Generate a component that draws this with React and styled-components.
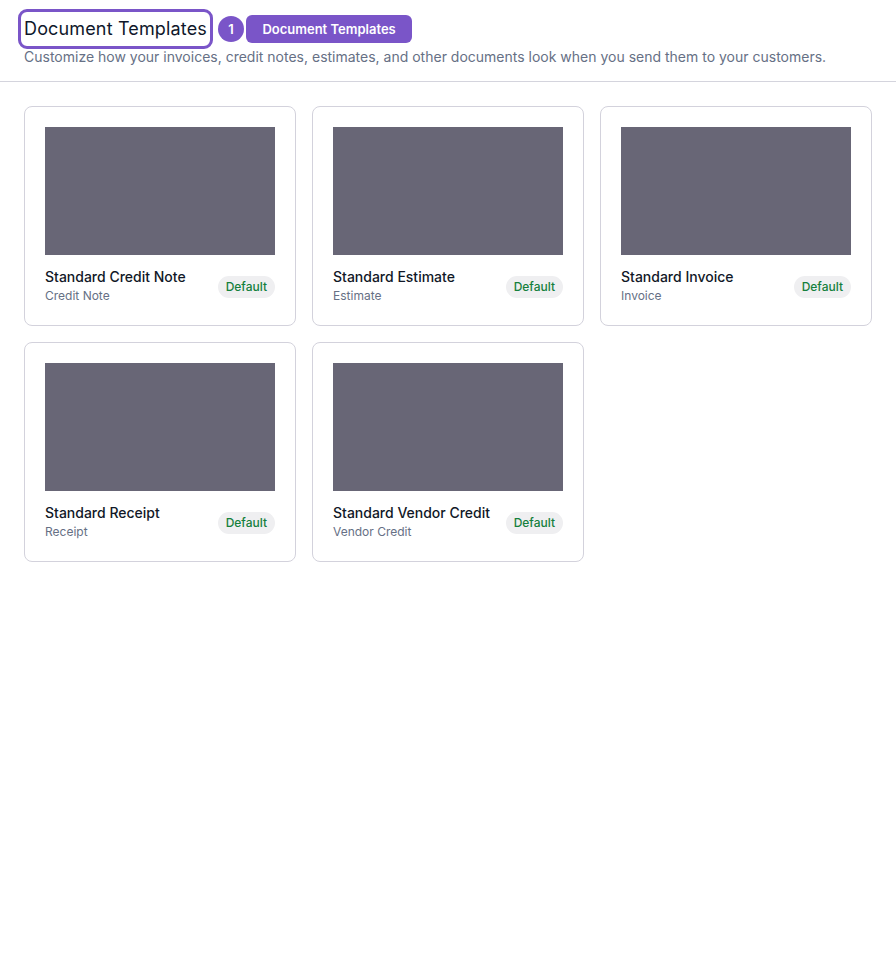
import styled, { createGlobalStyle } from "styled-components";

const GlobalStyle = createGlobalStyle`
  body {
    margin: 0;
    background: #ffffff;
    font-family: Inter, "Noto Sans", sans-serif;
    color: #111827;
  }
`;

const templates = [
  { name: "Standard Credit Note", type: "Credit Note" },
  { name: "Standard Estimate", type: "Estimate" },
  { name: "Standard Invoice", type: "Invoice" },
  { name: "Standard Receipt", type: "Receipt" },
  { name: "Standard Vendor Credit", type: "Vendor Credit" },
];

function App() {
  return (
    <>
      <GlobalStyle />
      <Header>
        <TitleRow>
          <Title>Document Templates</Title>
          <StepBadge>1</StepBadge>
          <StepLabel>Document Templates</StepLabel>
        </TitleRow>
        <Subtitle>
          Customize how your invoices, credit notes, estimates, and other documents look when you send them to your customers.
        </Subtitle>
      </Header>
      <Grid>
        {templates.map((t) => (
          <Card key={t.name}>
            <Preview />
            <CardFooter>
              <div>
                <CardName>{t.name}</CardName>
                <CardType>{t.type}</CardType>
              </div>
              <DefaultPill>Default</DefaultPill>
            </CardFooter>
          </Card>
        ))}
      </Grid>
    </>
  );
}

const Header = styled.header`
  padding: 15px 24px 14px;
  border-bottom: 1px solid #d4d4dd;
`;

const TitleRow = styled.div`
  display: flex;
  align-items: center;
`;

const Title = styled.h1`
  margin: 0;
  font-size: 18px;
  line-height: 28px;
  font-weight: 400;
  letter-spacing: 0.15px;
  color: #0f172a;
  outline: 3px solid #7a55c8;
  outline-offset: 3px;
  border-radius: 3px;
`;

const StepBadge = styled.span`
  margin-left: 11px;
  width: 26px;
  height: 26px;
  border-radius: 50%;
  background: #7a55c8;
  color: #fff;
  font-size: 13px;
  font-weight: 600;
  display: flex;
  align-items: center;
  justify-content: center;
`;

const StepLabel = styled.span`
  margin-left: 2px;
  height: 28px;
  padding: 0 16.5px;
  border-radius: 6px;
  background: #7a55c8;
  color: #fff;
  font-size: 13px;
  font-weight: 600;
  display: flex;
  align-items: center;
`;

const Subtitle = styled.p`
  margin: 0;
  margin-top: 4px;
  font-size: 14px;
  line-height: 20px;
  color: #667085;
`;

const Grid = styled.div`
  padding: 24px;
  display: grid;
  grid-template-columns: repeat(3, 1fr);
  gap: 16px;
`;

const Card = styled.div`
  border: 1px solid #d3d2dc;
  border-radius: 8px;
  padding: 20px 20px 20px;
`;

const Preview = styled.div`
  height: 128px;
  background: #686676;
`;

const CardFooter = styled.div`
  margin-top: 13px;
  display: flex;
  align-items: center;
  justify-content: space-between;
`;

const CardName = styled.div`
  font-size: 14px;
  line-height: 18px;
  font-weight: 500;
  color: #111827;
`;

const CardType = styled.div`
  margin-top: 1px;
  font-size: 12px;
  line-height: 18px;
  color: #667085;
`;

const DefaultPill = styled.span`
  padding: 3px 8px;
  border-radius: 999px;
  background: #efeff1;
  color: #15803d;
  font-size: 12px;
  line-height: 16px;
  font-weight: 500;
`;

export default App;
